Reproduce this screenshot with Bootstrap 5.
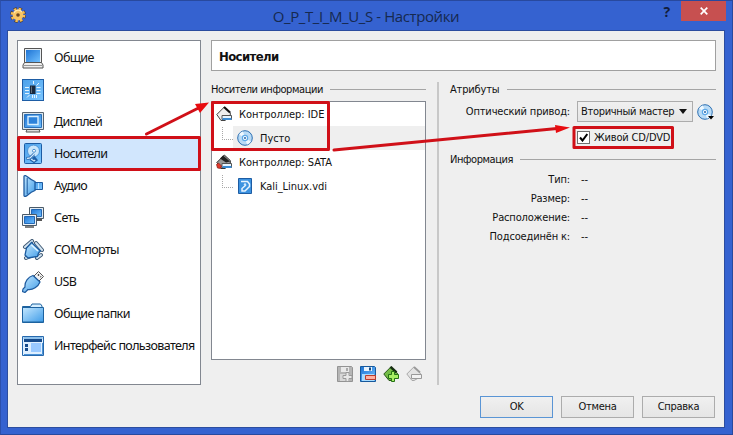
<!DOCTYPE html>
<html lang="ru">
<head>
<meta charset="utf-8">
<title>O_P_T_I_M_U_S - Настройки</title>
<link href="https://cdn.jsdelivr.net/npm/bootstrap@5.3.0/dist/css/bootstrap.min.css" rel="stylesheet">
<style>
body{width:733px;height:435px;overflow:hidden;font:11px/1.2 "DejaVu Sans Condensed","DejaVu Sans",sans-serif;font-stretch:condensed;letter-spacing:-.16px;color:#111;background:#3562d0}
.win{width:733px;height:435px;border:1px solid #28499e;border-left-color:#2c50ac;padding:0 7px 7px 6px}
.titlebar{height:29px}
.caption{font:15px/20px "Open Sans","Noto Sans",sans-serif;color:#16294f;letter-spacing:-.4px;padding-top:5px}
.tb-help{right:55px;top:1px;font:bold 14px/20px "Open Sans",sans-serif;color:#121d3d}
.tb-close{right:-1px;top:0;width:45px;height:20px;background:#c75050}
.gear{left:3px;top:6px}
.client{height:398px;background:#efefef;border:1px solid #2c4d9f;padding:9px 8px 0 9px}
.side{width:184px;height:345px;border:1px solid #828790;background:#fff;padding-top:1px}
.side-item{height:32px;padding-left:4px;font:12.5px/18px "Noto Sans","Open Sans",sans-serif;letter-spacing:-.62px;white-space:nowrap;color:#111}
.side-item svg{width:22px;height:22px;margin-right:10px;flex:none}
.side-item.sel{background:#d1e6fd}
.main-pane{padding-left:10px}
.headbox{height:31px;border:1px solid #a0a0a0;background:#fff;padding-left:7px;font:bold 13px/32px "DejaVu Sans Condensed","DejaVu Sans",sans-serif;font-stretch:condensed;letter-spacing:-.6px}
.rule{height:1px;background:#a5a5a5;margin-left:7px}
.grp{height:14px;margin:11px 0 5px}
.grp span:first-child{padding-top:1px}
.grp-info{margin:8px 0 3px}
.tight{letter-spacing:-.42px}
.tree{width:215px;height:259px;border:1px solid #828790;background:#fff;letter-spacing:-.04px}
.tree-row{height:24px;padding-left:4px}
.tree-row svg{width:16px;height:16px;flex:none}
.node-text{padding:1px 0 0 7px}
.child{padding-left:10px}
.child .body-part{height:24px;flex:1;padding-left:4px}
.child .body-part.hot{background:#efefef}
.elbow{width:11px;height:13px;border:dotted #a8a8a8;border-width:0 0 1px 1px;margin-top:-9px}
.split{width:2px;height:303px;background:#c8c8c8;margin:11px 11px 0 11px}
.combo{width:116px;height:21px;border:1px solid #acacac;background:linear-gradient(#f0f0f0,#e5e5e5);padding:0 5px 0 3px;margin-left:7px}
.combo-txt{white-space:nowrap;letter-spacing:-.3px;padding-top:1px}
.lab{width:120px;text-align:right;white-space:nowrap;padding-top:1px}
.val{padding:1px 0 0 11px}
.chk-line{margin:8px 0 0 127px}
.chk{width:13px;height:13px;border:1px solid #707070;background:#fff}
.chk-text{padding:1px 0 0 4px}
.info-row{height:19px}
.wbtn{width:73px;height:22px;border:1px solid #acacac;border-radius:0;background:linear-gradient(#f0f0f0,#e5e5e5);padding:0;font-size:11px;line-height:20px;letter-spacing:-.3px;color:#111}
.wbtn.def{border-color:#5a95d5}
.tools{gap:7px;padding:6px 4px 0 0}
.tools svg{width:16px;height:16px}
.actions{gap:8px;padding:11px 1px 0 0}
.marks{left:0;top:0;pointer-events:none}
</style>
<script src="https://cdn.jsdelivr.net/npm/bootstrap@5.3.0/dist/js/bootstrap.bundle.min.js"></script>
</head>
<body class="position-relative">
<svg width="0" height="0" class="position-absolute">
<defs>
<linearGradient id="b" x1="0" y1="0" x2="1" y2="1"><stop offset="0" stop-color="#1f74d4"/><stop offset="1" stop-color="#70c0ff"/></linearGradient>
<linearGradient id="l" x1="0" y1="0" x2="1" y2="1"><stop offset="0" stop-color="#c5e8ff"/><stop offset="1" stop-color="#3f9ce8"/></linearGradient>
<linearGradient id="p" x1="0" y1="0" x2="1" y2="1"><stop offset="0" stop-color="#4aa0ea"/><stop offset="1" stop-color="#7cc6ff"/></linearGradient>
<symbol id="disc" viewBox="0 0 16 16"><circle cx="8" cy="8" r="7.3" fill="#b9dbf6" stroke="#2c6fb2"/><path d="M8 8 2 4.5A7 7 0 0 1 6 1.6zM8 8l6 3.5a7 7 0 0 1-4 3z" fill="#eef8ff"/><circle cx="8" cy="8" r="3.2" fill="#5da9e8"/><circle cx="8" cy="8" r="2" fill="#fff"/><circle cx="8" cy="8" r="1" fill="#1f62aa"/></symbol>
<symbol id="hdd" viewBox="0 0 22 22"><rect x="2.500" y=".5" width="17" height="20" rx="1" fill="url(#p)" stroke="#1d5ca3"/><circle cx="11.500" cy="8" r="6" fill="#c9e6fb" stroke="#4a94da"/><circle cx="12" cy="7.800" r="1.500" fill="#fff" stroke="#4b90d0"/><path d="M4.500 15.500 8 15l4-4M8.500 16l3.500 2.500 2-1.500-2.500-3" fill="none" stroke="#1f5fa6" stroke-width="2.800"/><path d="M5 15.500 8 15l4-4M9 16l3 2 1.200-1" fill="none" stroke="#d0eaff" stroke-width="1.300"/></symbol>
<symbol id="hdds" viewBox="0 0 16 16"><path d="M1.500.500h13v15h-13z" fill="#3c92e0" stroke="#1d5ca3"/><path d="M4 3.500h6.500L12.500 6v2.500L8 13H5v-2.500L9 7" fill="none" stroke="#e6f4ff" stroke-width="1.500"/><circle cx="8" cy="6.500" r="1.200" fill="#cfe8fb"/></symbol>
</defs>
</svg>
<div class="win">
  <div class="titlebar position-relative text-center">
    <svg class="gear position-absolute" width="16" height="16" viewBox="0 0 16 16"><circle cx="8" cy="8" r="6.3" fill="none" stroke="#4a3a28" stroke-width="3.2" stroke-dasharray="3 1.95"/><circle cx="8" cy="8" r="6" fill="none" stroke="#f6bd55" stroke-width="2.600" stroke-dasharray="2.4 2.31"/><circle cx="8" cy="8" r="5.4" fill="#f7c566"/><path d="M4 6a4.6 4.6 0 0 1 8-1" stroke="#ffe8ae" fill="none" stroke-width="1.3"/><circle cx="8" cy="8" r="1.8" fill="#6a4520"/></svg>
    <div class="caption">O_P_T_I_M_U_S - Настройки</div>
    <span class="tb-help position-absolute">?</span>
    <div class="tb-close position-absolute d-flex align-items-center justify-content-center"><svg width="8" height="8" viewBox="0 0 8 8"><path d="M.7.7l6.6 6.6M7.3.7.7 7.3" stroke="#fff" stroke-width="1.7"/></svg></div>
  </div>
  <div class="client">
    <div class="d-flex">
      <nav class="side">
        <div class="side-item d-flex align-items-center"><svg viewBox="0 0 22 22"><path d="M2.500 1.500h17v15h-17z" fill="#e9eef2" stroke="#555"/><path d="M4 3h14v12H4z" fill="url(#b)"/><path d="M2.500 15.500h17l1.500 2.500v3H1v-3z" fill="#eee" stroke="#555"/><path d="M2 18.500h18" stroke="#999"/></svg>Общие</div>
        <div class="side-item d-flex align-items-center"><svg viewBox="0 0 22 22"><rect x=".5" y=".5" width="21" height="21" fill="url(#p)" stroke="#1e5da5"/><path d="M3 8.500h4M3 11.500h4M3 14.500h4M14.500 8.500h4M14.500 11.500h4M14.500 14.500h4M10.500 16v3M12.500 16v3M14.500 16v3M11.500 2v3M17 4l-2.500 2.500M5 18.500l2.500-2.500" stroke="#e2f4ff"/><rect x="8" y="6.500" width="5.500" height="8.500" fill="#18293d"/><path d="M9.500 7.500v6.500" stroke="#66717c"/></svg>Система</div>
        <div class="side-item d-flex align-items-center"><svg viewBox="0 0 22 22"><path d="M.5 1.500h21v17H.5z" fill="#dce7ef" stroke="#596570"/><path d="M2.500 3.500h17v13h-17z" fill="url(#b)" stroke="#2a70b8"/><path d="M6 5.500h10v8H6z" fill="#2d82da" stroke="#d8f0ff" stroke-width="1.400"/><path d="M5 18.500h12l1 2.500H4z" fill="#ddd" stroke="#555"/></svg>Дисплей</div>
        <div class="side-item sel d-flex align-items-center"><svg viewBox="0 0 22 22"><use href="#hdd"/></svg>Носители</div>
        <div class="side-item d-flex align-items-center"><svg viewBox="0 0 22 22"><path d="M12 7.500h8.500v7H12z" fill="url(#p)" stroke="#1e5a9e"/><path d="M2 1.500Q2 .5 3.500.7C6 1.500 6.500 4 13 6.500v9C6.500 18 6 20.500 3.500 21.300Q2 21.500 2 20.500z" fill="url(#l)" stroke="#1e5a9e" stroke-width="1.300"/><path d="M5.200 3v16" stroke="#1e5a9e"/><path d="M16.500 8v6" stroke="#b9e0ff"/></svg>Аудио</div>
        <div class="side-item d-flex align-items-center"><svg viewBox="0 0 22 22"><path d="M7.500.500h14v11h-14z" fill="#e2ebf3" stroke="#4b5a68"/><path d="M9.500 2.500h10v7h-10z" fill="url(#b)" stroke="#2468b4"/><path d="M14 13h6" stroke="#555" stroke-width="2"/><path d="M.5 7.500h14v11H.5z" fill="#edf2f7" stroke="#4b5a68"/><path d="M2.500 9.500h10v7h-10z" fill="url(#b)" stroke="#2468b4"/><path d="M3 20h9" stroke="#555" stroke-width="1.500"/></svg>Сеть</div>
        <div class="side-item d-flex align-items-center"><svg viewBox="0 0 22 22"><path d="m3 8 7-6M14 4l6 7M4 19l5-2M15 19l4-3" stroke="#425c76" stroke-width="4" stroke-linecap="round"/><path d="m3 8 7-6M14 4l6 7M4 19l5-2M15 19l4-3" stroke="#d5e5f2" stroke-width="2" stroke-linecap="round"/><path d="m9.500 3.500 9 8.500-2 2-1 3.500L6 19l-3-3 1.500-7z" fill="url(#l)" stroke="#1b5b9f" stroke-width="1.300"/><path d="m9.500 6 6.500 6" stroke="#e4f5ff" stroke-width="1.500"/></svg>COM-порты</div>
        <div class="side-item d-flex align-items-center"><svg viewBox="0 0 22 22"><path d="m12 5 4.500-4.500 5 5L17 10z" fill="#f2f2f2" stroke="#555"/><path d="m16 3.500 1 1M18.500 5.500l.5.500" stroke="#222" stroke-width="1.500"/><path d="M11 4.500 18 11c-2 5-7 8-12 7.500l-3 3-2.500-1L1 18l2-2C2.500 11 6 6 11 4.500z" fill="url(#l)" stroke="#1e5a9e" stroke-width="1.200"/></svg>USB</div>
        <div class="side-item d-flex align-items-center"><svg viewBox="0 0 22 22"><path d="M.5 19.500v-16h8L10 1h8.500l1.500 2v3h1.500v13.500z" fill="#d6efff" stroke="#1d629f"/><path d="M.5 4.500h21v14.500H.5z" fill="url(#l)" stroke="#1d629f"/></svg>Общие папки</div>
        <div class="side-item d-flex align-items-center"><svg viewBox="0 0 22 22"><path d="M.5 1.500h21v19H.5z" fill="#deefff" stroke="#2769ad"/><path d="M1.500 2h19v2h-19z" fill="#8dc0eb"/><path d="M2 4h18v3H2zM3 9h3v3H3zM3 13h3v3H3z" fill="#164a8b"/><path d="M9 8h10v9H9z" fill="#99c9ff"/><path d="M2 19.500h18.500V8" stroke="#4a91d5" fill="none"/></svg>Интерфейс пользователя</div>
      </nav>
      <main class="main-pane flex-grow-1">
        <div class="headbox">Носители</div>
        <div class="d-flex">
          <section>
            <div class="grp d-flex align-items-center"><span class="tight">Носители информации</span><span class="rule flex-grow-1"></span></div>
            <div class="tree">
              <div class="tree-row d-flex align-items-center"><svg viewBox="0 0 16 16"><path d="m.8 8.500 7.500-7.500 6 5.500v3.500L9 14.500H5z" fill="#eee" stroke="#444"/><path d="m8 1 6 5.500" stroke="#111" stroke-width="2.200"/><path d="M6 9.500h9.500v4H6z" fill="#e7f5ff" stroke="#555"/><path d="M6.500 12h9v2h-9z" fill="#3b8bd2"/></svg><span class="node-text">Контроллер: IDE</span></div>
              <div class="tree-row child d-flex align-items-center"><span class="elbow"></span><span class="body-part hot d-flex align-items-center"><svg><use href="#disc"/></svg><span class="node-text">Пусто</span></span></div>
              <div class="tree-row d-flex align-items-center"><svg viewBox="0 0 16 16"><path d="m.8 8.500 7.500-7.500 6 5.500v3.500L9 14.500H5z" fill="#999" stroke="#333"/><path d="m7 1.500 7 6-4 1-6-4z" fill="#222"/><path d="M6 9.500h9.500v4H6z" fill="#e7f5ff" stroke="#555"/><path d="M6.500 12h9v2h-9z" fill="#3b8bd2"/><path d="m.5 10.500 2-1.500 3 3-1 2.500-3-.5z" fill="#e2382c" stroke="#832018" stroke-width=".7"/></svg><span class="node-text">Контроллер: SATA</span></div>
              <div class="tree-row child d-flex align-items-center"><span class="elbow"></span><span class="body-part d-flex align-items-center"><svg viewBox="0 0 16 16"><use href="#hdds"/></svg><span class="node-text">Kali_Linux.vdi</span></span></div>
            </div>
            <div class="tools d-flex justify-content-end">
              <svg viewBox="0 0 16 16"><path d="M.5.500h14l1 1v14H.5z" fill="#b5b5b5" stroke="#939393"/><path d="M4 1h8v5H4z" fill="#e9e9e9"/><path d="M9 2h2v3H9z" fill="#aaa"/><path d="M3 8h10v7H3z" fill="#d7d7d7"/><path d="M9 6.500h3v3h3v3h-3v3H9v-3H6v-3h3z" fill="#e8e8e8" stroke="#999"/></svg>
              <svg viewBox="0 0 16 16"><path d="M.5.500h14l1 1v14H.5z" fill="url(#b)" stroke="#17599c"/><path d="M4 1h8v4H4z" fill="#eaf5ff"/><path d="M9 1.500h2v3H9z" fill="#174b81"/><path d="M2 8h12v7H2z" fill="#a8dcff"/><path d="M5.500 9.500h10v4h-10z" fill="#ffb0a0" stroke="#b83c2c"/></svg>
              <svg viewBox="0 0 16 16"><path d="m.8 8 7-7 6.500 6v4L8 14.500H6z" fill="#75bd48" stroke="#28551b"/><path d="m7.500.800 6 5.500" stroke="#172f12" stroke-width="2.500"/><path d="M8.500 5.500h3v3h4v4h-4v3h-3v-3h-3v-4h3z" fill="#a6ee63" stroke="#257315"/></svg>
              <svg viewBox="0 0 16 16"><path d="m.8 8 7-7 6.500 6v4L8 14.500H6z" fill="#e3e3e3" stroke="#a8a8a8"/><path d="m8 1 6 5.500" stroke="#999" stroke-width="1.800"/><path d="M5.500 8.500h10v4h-10z" fill="#f2f2f2" stroke="#999"/></svg>
            </div>
          </section>
          <div class="split"></div>
          <section class="flex-grow-1">
            <div class="grp d-flex align-items-center"><span>Атрибуты</span><span class="rule flex-grow-1"></span></div>
            <div class="d-flex align-items-center"><span class="lab">Оптический привод:</span><div class="combo d-flex align-items-center justify-content-between"><span class="combo-txt">Вторичный мастер</span><svg class="flex-shrink-0" width="8" height="5" viewBox="0 0 8 5"><path d="M0 0h8L4 5z" fill="#111"/></svg></div><svg class="ms-1" width="18" height="16" viewBox="0 0 18 16"><use href="#disc" width="16" height="16"/><path d="M11 12h6l-3 3.500z" fill="#000"/></svg></div>
            <div class="chk-line d-flex align-items-center"><span class="chk d-flex align-items-center justify-content-center"><svg width="9" height="9" viewBox="0 0 9 9"><path d="m1 4.500 2.500 3L8.300 1" fill="none" stroke="#000" stroke-width="2"/></svg></span><span class="chk-text">Живой CD/DVD</span></div>
            <div class="grp grp-info d-flex align-items-center"><span class="tight">Информация</span><span class="rule flex-grow-1"></span></div>
            <div class="info-row d-flex align-items-center"><span class="lab">Тип:</span><span class="val">--</span></div>
            <div class="info-row d-flex align-items-center"><span class="lab">Размер:</span><span class="val">--</span></div>
            <div class="info-row d-flex align-items-center"><span class="lab">Расположение:</span><span class="val">--</span></div>
            <div class="info-row d-flex align-items-center"><span class="lab">Подсоединён к:</span><span class="val">--</span></div>
          </section>
        </div>
      </main>
    </div>
    <div class="actions d-flex justify-content-end">
      <button class="btn wbtn def">OK</button><button class="btn wbtn">Отмена</button><button class="btn wbtn">Справка</button>
    </div>
  </div>
</div>
<svg class="marks position-absolute" width="733" height="435" viewBox="0 0 733 435" fill="none" stroke="#d01018" stroke-width="3" stroke-linejoin="round" stroke-linecap="round">
<path d="M18.500 137.500h181v32h-181zM212.500 102.500h116v47h-116zM574 127.500h98.500v20H574zM146.500 134l51-25.500M334 150l223-21.500"/>
<path d="m209 102.500-9 10.500-5-9zM570 127.500l-14 5.500-1-8z" fill="#e80c10" stroke="none"/>
</svg>
</body>
</html>
